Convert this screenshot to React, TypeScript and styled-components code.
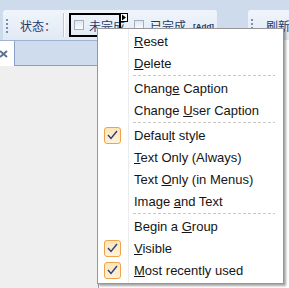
import React from 'react';
import styled, { createGlobalStyle } from 'styled-components';

const GlobalStyle = createGlobalStyle`
  html, body {
    margin: 0;
    padding: 0;
    background: #ffffff;
  }
  body {
    font-family: "Liberation Sans", "Noto Sans CJK SC", sans-serif;
  }
`;

const Screen = styled.div`
  position: relative;
  width: 289px;
  height: 288px;
  overflow: hidden;
  display: flex;
  flex-direction: column;
  background: #ffffff;
`;

const Dock = styled.div`
  flex: none;
  height: 40px;
  box-sizing: border-box;
  padding: 10px 0 0 3px;
  display: flex;
  background: #cedbec;
`;

const Toolbar = styled.div<{ $width?: number; $offset?: number }>`
  flex: none;
  display: flex;
  align-items: center;
  height: 30px;
  box-sizing: border-box;
  width: ${p => (p.$width ? `${p.$width}px` : 'auto')};
  margin-left: ${p => p.$offset ?? 0}px;
  padding-left: 3px;
  padding-right: 12px;
  border-radius: 3px 3px 0 0;
  background: linear-gradient(#f0f5fb, #e0e9f4);
  white-space: nowrap;
`;

const Grip = styled.span`
  flex: none;
  align-self: flex-start;
  margin-top: 9px;
  width: 2px;
  height: 14px;
  background: repeating-linear-gradient(to bottom, #7a8fb3 0 2px, transparent 2px 4px);
`;

const Label = styled.span<{ $ml: number }>`
  margin-left: ${p => p.$ml}px;
  font-family: "Noto Sans CJK SC", sans-serif;
  font-size: 12px;
  color: #1d3a6b;
`;

const ToolSep = styled.span`
  flex: none;
  width: 1px;
  height: 24px;
  margin-left: 7px;
  background: #b9c9dd;
  box-shadow: 1px 0 0 #ffffff;
`;

const CheckItem = styled.div<{ $ml: number }>`
  position: relative;
  display: flex;
  align-items: center;
  gap: 5px;
  height: 24px;
  margin-left: ${p => p.$ml}px;
  padding-left: 5px;
`;

const Frame = styled.span`
  position: absolute;
  left: 0;
  top: 0;
  width: 52px;
  height: 24px;
  box-sizing: border-box;
  border: 2px solid #000000;
`;

const Marker = styled.svg`
  position: absolute;
  left: 51px;
  top: 0;
`;

const Box = styled.span`
  flex: none;
  width: 10px;
  height: 10px;
  box-sizing: border-box;
  border: 1px solid #a3afc0;
  background: linear-gradient(#e2e6ec, #fbfcfd);
`;

const AddTag = styled.span`
  margin-left: 2px;
  margin-top: 2px;
  font-family: "Liberation Sans", sans-serif;
  font-size: 8px;
  font-weight: bold;
  color: #1d3a6b;
`;

const Workspace = styled.div`
  flex: 1;
  display: flex;
`;

const LeftPanel = styled.div`
  width: 98px;
  display: flex;
  flex-direction: column;
  background: #efefef;
  border-right: 1px solid #a0a0a0;
`;

const TabStrip = styled.div`
  display: flex;
  height: 26px;
  box-sizing: border-box;
  border-top: 1px solid #9fb3d1;
`;

const ActiveTab = styled.div`
  width: 14px;
  display: flex;
  align-items: center;
  background: #ffffff;
`;

const TabFill = styled.div`
  flex: 1;
  background: #cfdcee;
  border: 1px solid #8aa1c5;
  border-top: none;
  border-right: none;
`;

const Menu = styled.div`
  position: absolute;
  left: 97px;
  top: 28px;
  width: 187px;
  height: 256px;
  box-sizing: border-box;
  padding: 1px 0;
  border: 1px solid #979797;
  background: #ffffff;
  box-shadow: 2px 2px 2px rgba(0, 0, 0, 0.35);
  font-family: "Liberation Sans", sans-serif;
  font-size: 13px;
  color: #151515;

  &::before {
    content: '';
    position: absolute;
    left: 30px;
    top: 0;
    bottom: 0;
    width: 1px;
    background: #ececec;
  }
`;

const Row = styled.div`
  position: relative;
  display: grid;
  grid-template-columns: 36px 1fr;
  align-items: center;
  height: 22px;
  white-space: nowrap;
`;

const CheckBadge = styled.span`
  display: flex;
  align-items: center;
  justify-content: center;
  width: 17px;
  height: 17px;
  margin-left: 6px;
  box-sizing: border-box;
  border: 1px solid #f0a24c;
  border-radius: 3px;
  background: linear-gradient(#fde6b6, #fef2d8);
`;

const Key = styled.span`
  text-decoration: underline;
`;

const Divider = styled.div`
  height: 3px;
  margin: 0 8px 0 35px;
  background-image: repeating-linear-gradient(to right, #c8c8c8 0 3px, transparent 3px 5px);
  background-size: 100% 1px;
  background-position: 0 1px;
  background-repeat: no-repeat;
`;

type Entry = { label: string; checked?: boolean } | 'sep';

const entries: Entry[] = [
  { label: '&Reset' },
  { label: '&Delete' },
  'sep',
  { label: 'Chang&e Caption' },
  { label: 'Change &User Caption' },
  'sep',
  { label: 'Defau&lt style', checked: true },
  { label: '&Text Only (Always)' },
  { label: 'Text &Only (in Menus)' },
  { label: 'Image &and Text' },
  'sep',
  { label: 'Begin a &Group' },
  { label: '&Visible', checked: true },
  { label: '&Most recently used', checked: true },
];

function Mnemonic({ text }: { text: string }) {
  const i = text.indexOf('&');
  if (i < 0) return <>{text}</>;
  return (
    <>
      {text.slice(0, i)}
      <Key>{text[i + 1]}</Key>
      {text.slice(i + 2)}
    </>
  );
}

const Tick = () => (
  <svg width="11" height="10" viewBox="0 0 11 10">
    <polyline points="1,5 4,8.5 10,1" fill="none" stroke="#2c3b82" strokeWidth="1.4" />
  </svg>
);

export default function App() {
  return (
    <>
      <GlobalStyle />
      <Screen>
        <Dock>
          <Toolbar $width={214}>
            <Grip />
            <Label $ml={12}>状态：</Label>
            <ToolSep />
            <CheckItem $ml={5}>
              <Box />
              <Label $ml={0}>未完成</Label>
              <Frame />
              <Marker width="8" height="9" viewBox="0 0 8 9">
                <rect x="0.5" y="0.5" width="7" height="8" fill="#ffffff" stroke="#000000" />
                <polygon points="2,1.5 6,4.5 2,7.5" fill="#000000" />
              </Marker>
            </CheckItem>
            <CheckItem $ml={4}>
              <Box />
              <Label $ml={1}>已完成</Label>
              <AddTag>[Add]</AddTag>
            </CheckItem>
          </Toolbar>
          <Toolbar $offset={31}>
            <Grip />
            <Label $ml={13}>刷新</Label>
          </Toolbar>
        </Dock>
        <Workspace>
          <LeftPanel>
            <TabStrip>
              <ActiveTab>
                <svg width="9" height="8" viewBox="0 0 9 8" style={{ marginLeft: -1 }}>
                  <path d="M1 1 L8 7 M8 1 L1 7" stroke="#5f6f91" strokeWidth="2" />
                </svg>
              </ActiveTab>
              <TabFill />
            </TabStrip>
          </LeftPanel>
        </Workspace>
        <Menu>
          {entries.map((e, i) =>
            e === 'sep' ? (
              <Divider key={i} />
            ) : (
              <Row key={i}>
                <span>
                  {e.checked && (
                    <CheckBadge>
                      <Tick />
                    </CheckBadge>
                  )}
                </span>
                <span>
                  <Mnemonic text={e.label} />
                </span>
              </Row>
            )
          )}
        </Menu>
      </Screen>
    </>
  );
}
